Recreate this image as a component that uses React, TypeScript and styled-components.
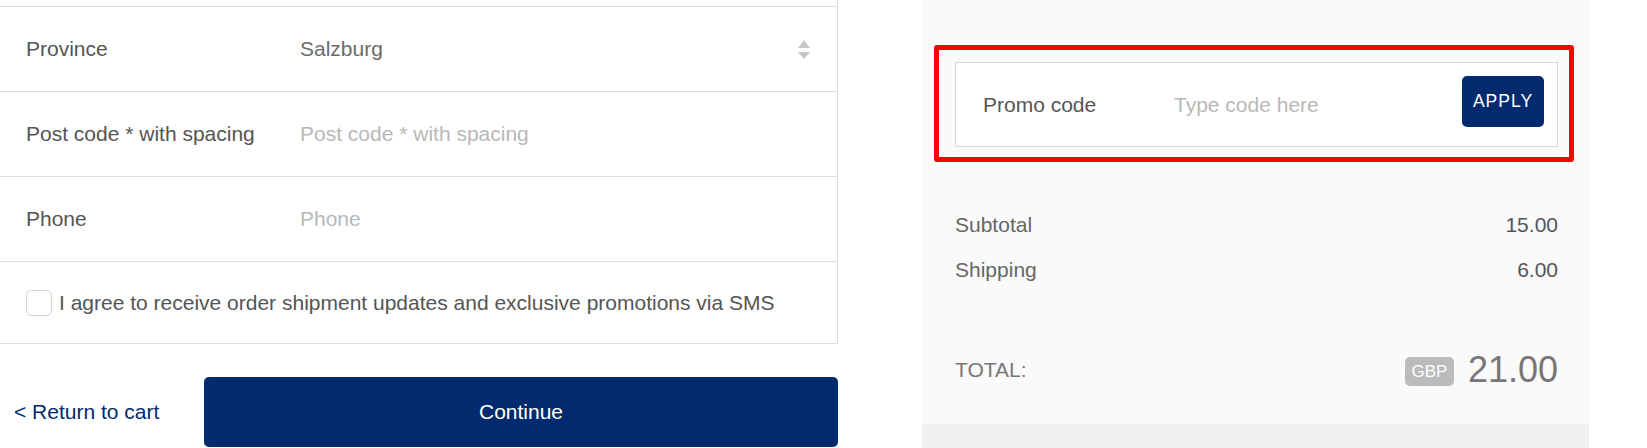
import React from "react";
import { styled, createGlobalStyle } from "styled-components";

const GlobalStyle = createGlobalStyle`
  * {
    box-sizing: border-box;
  }

  body {
    margin: 0;
    background: #ffffff;
    font-family: "Liberation Sans", Arial, sans-serif;
    color: #555555;
  }
`;

const Page = styled.div`
  display: flex;
  align-items: flex-start;
  width: 1647px;
  height: 448px;
  overflow: hidden;
`;

const Main = styled.main`
  width: 838px;
  flex-shrink: 0;
`;

const Card = styled.section`
  padding-top: 6px;
  border-right: 1px solid #dddddd;
  border-bottom: 1px solid #dddddd;
`;

const FieldRow = styled.div`
  display: flex;
  align-items: center;
  height: 85px;
  padding: 0 27px 0 26px;
  border-top: 1px solid #dddddd;
`;

const FieldLabel = styled.label`
  width: 274px;
  flex-shrink: 0;
  font-size: 21px;
  color: #555555;
`;

const FieldValue = styled.div`
  flex: 1;
  font-size: 21px;
  color: #6b6b6b;
`;

const FieldInput = styled.input`
  flex: 1;
  min-width: 0;
  border: none;
  outline: none;
  padding: 0;
  background: transparent;
  font-family: inherit;
  font-size: 21px;
  color: #555555;

  &::placeholder {
    color: #b8b8b8;
  }
`;

const CheckRow = styled.label`
  display: flex;
  align-items: center;
  height: 82px;
  padding-left: 26px;
  border-top: 1px solid #dddddd;
  font-size: 21px;
  color: #555555;
`;

const CheckBox = styled.span`
  width: 26px;
  height: 26px;
  margin-right: 7px;
  border: 1px solid #d4d4d4;
  border-radius: 5px;
  background: #ffffff;
`;

const Actions = styled.div`
  display: flex;
  align-items: center;
  margin-top: 33px;
`;

const BackLink = styled.a`
  width: 204px;
  padding-left: 14px;
  font-size: 21px;
  color: #012b6e;
  text-decoration: none;
`;

const ContinueButton = styled.button`
  flex: 1;
  height: 70px;
  border: none;
  border-radius: 5px;
  background: #012b6e;
  color: #ffffff;
  font-family: inherit;
  font-size: 21px;
`;

const Sidebar = styled.aside`
  display: flex;
  flex-direction: column;
  width: 667px;
  height: 448px;
  margin-left: 84px;
  flex-shrink: 0;
`;

const Summary = styled.div`
  height: 424px;
  padding: 62px 31px 0 33px;
  background: #fafafa;
`;

const FooterBand = styled.div`
  flex: 1;
  background: #f0f0f0;
`;

const PromoWrap = styled.div`
  position: relative;
`;

const PromoBox = styled.div`
  display: flex;
  align-items: center;
  height: 85px;
  padding: 0 13px 0 27px;
  border: 1px solid #d9d9d9;
  background: #ffffff;
`;

const PromoLabel = styled.label`
  width: 191px;
  flex-shrink: 0;
  font-size: 21px;
  color: #555555;
`;

const ApplyButton = styled.button`
  width: 82px;
  height: 51px;
  margin-bottom: 6px;
  border: none;
  border-radius: 5px;
  background: #012b6e;
  color: #ffffff;
  font-family: inherit;
  font-size: 17.5px;
  letter-spacing: 1px;
`;

const Highlight = styled.div`
  position: absolute;
  top: -17px;
  left: -21px;
  right: -16px;
  bottom: -15px;
  border: 5px solid #ff0000;
  border-radius: 3px;
  pointer-events: none;
`;

const Lines = styled.div`
  display: flex;
  flex-direction: column;
  gap: 21px;
  margin-top: 66px;
`;

const Line = styled.div`
  display: flex;
  justify-content: space-between;
  line-height: 24px;
  font-size: 21px;
  color: #666666;
`;

const Amount = styled.span`
  color: #555555;
`;

const TotalRow = styled.div`
  display: flex;
  align-items: center;
  justify-content: space-between;
  margin-top: 70px;
  height: 36px;
`;

const TotalLabel = styled.span`
  font-size: 21px;
  color: #777777;
`;

const TotalValue = styled.div`
  display: flex;
  align-items: center;
  gap: 14px;
`;

const Currency = styled.span`
  display: flex;
  align-items: center;
  justify-content: center;
  width: 49px;
  height: 29px;
  margin-top: 3px;
  border-radius: 5px;
  background: #bbbbbb;
  color: #ffffff;
  font-size: 17px;
`;

const Price = styled.span`
  font-size: 36px;
  line-height: 36px;
  color: #777777;
`;

function SelectArrows() {
  return (
    <svg width="12" height="19" viewBox="0 0 12 19" fill="#c6c6c6">
      <polygon points="6,0 12,8 0,8" />
      <polygon points="0,12 12,12 6,19" />
    </svg>
  );
}

function App() {
  return (
    <>
      <GlobalStyle />
      <Page>
        <Main>
          <Card>
            <FieldRow>
              <FieldLabel>Province</FieldLabel>
              <FieldValue>Salzburg</FieldValue>
              <SelectArrows />
            </FieldRow>
            <FieldRow>
              <FieldLabel>Post code * with spacing</FieldLabel>
              <FieldInput placeholder="Post code * with spacing" />
            </FieldRow>
            <FieldRow>
              <FieldLabel>Phone</FieldLabel>
              <FieldInput placeholder="Phone" />
            </FieldRow>
            <CheckRow>
              <CheckBox />
              I agree to receive order shipment updates and exclusive promotions
              via SMS
            </CheckRow>
          </Card>
          <Actions>
            <BackLink href="#">&lt; Return to cart</BackLink>
            <ContinueButton>Continue</ContinueButton>
          </Actions>
        </Main>
        <Sidebar>
          <Summary>
            <PromoWrap>
              <PromoBox>
                <PromoLabel>Promo code</PromoLabel>
                <FieldInput placeholder="Type code here" />
                <ApplyButton>APPLY</ApplyButton>
              </PromoBox>
              <Highlight />
            </PromoWrap>
            <Lines>
              <Line>
                <span>Subtotal</span>
                <Amount>15.00</Amount>
              </Line>
              <Line>
                <span>Shipping</span>
                <Amount>6.00</Amount>
              </Line>
            </Lines>
            <TotalRow>
              <TotalLabel>TOTAL:</TotalLabel>
              <TotalValue>
                <Currency>GBP</Currency>
                <Price>21.00</Price>
              </TotalValue>
            </TotalRow>
          </Summary>
          <FooterBand />
        </Sidebar>
      </Page>
    </>
  );
}

export default App;
